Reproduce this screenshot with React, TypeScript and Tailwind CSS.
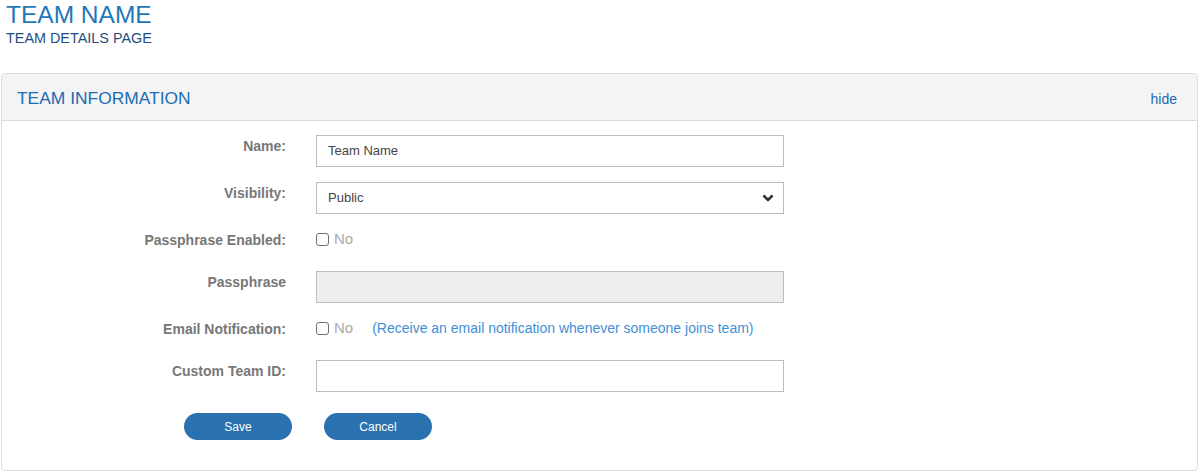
const font = { fontFamily: '"Liberation Sans", Arial, sans-serif' };

function Checkbox() {
  return (
    <span className="flex items-center">
      <span className="w-[13px] h-[13px] border border-[#6f6f6f] rounded-[3px] bg-white" />
      <span className="ml-[5px] text-[15px] leading-[20px] text-[#aaaaaa]">No</span>
    </span>
  );
}

function Row({
  label,
  children,
  kind = 'input',
}: {
  label: string;
  children: React.ReactNode;
  kind?: 'input' | 'check';
}) {
  return (
    <div className={`flex mb-[15px] ${kind === 'check' ? 'h-[27px]' : ''}`}>
      <div className="w-[284px] text-right font-bold text-[14px] leading-[20px] text-[#777] pt-[1px]">
        {label}
      </div>
      <div className="ml-[30px] flex">{children}</div>
    </div>
  );
}

export default function App() {
  return (
    <div className="w-[1200px] h-[472px] bg-white overflow-hidden" style={font}>
      <div className="pl-[6px] pt-[1px]">
        <h1 className="text-[24.5px] leading-[28px] text-[#1f78b8]">TEAM NAME</h1>
        <h2 className="text-[14.4px] leading-[18px] text-[#1d4e7f]">TEAM DETAILS PAGE</h2>
      </div>

      <div className="mt-[26px] ml-[1px] mr-[2px] border border-[#dcdcdc] rounded-[4px]">
        <div className="flex justify-between items-start bg-[#f4f4f4] border-b border-[#dcdcdc] rounded-t-[4px] pl-[15px] pr-[20px] pt-[14px] pb-[11px]">
          <span className="text-[17.4px] leading-[20px] text-[#1a6bb5]">TEAM INFORMATION</span>
          <span className="text-[14px] leading-[20px] text-[#1a6bb5] pt-[1px]">hide</span>
        </div>

        <div className="pt-[14px] pb-[30px]">
          <Row label="Name:">
            <div className="w-[468px] h-[32px] border border-[#bcbcbc] px-[11px] flex items-center text-[13px] text-[#444]">
              Team Name
            </div>
          </Row>
          <Row label="Visibility:">
            <div className="w-[468px] h-[32px] border border-[#bcbcbc] pl-[11px] pr-[9px] flex items-center justify-between text-[13px] text-[#444]">
              <span>Public</span>
              <svg width="12" height="8" viewBox="0 0 12 8">
                <path d="M1.5 1.5 L6 6 L10.5 1.5" fill="none" stroke="#333" strokeWidth="2.6" />
              </svg>
            </div>
          </Row>
          <Row label="Passphrase Enabled:" kind="check">
            <div className="h-[20px] flex items-center">
              <Checkbox />
            </div>
          </Row>
          <Row label="Passphrase">
            <div className="w-[468px] h-[32px] border border-[#bcbcbc] bg-[#eeeeee]" />
          </Row>
          <Row label="Email Notification:" kind="check">
            <div className="h-[20px] flex items-center">
              <Checkbox />
              <span className="ml-[19px] text-[14px] text-[#3f8fd6]">
                (Receive an email notification whenever someone joins team)
              </span>
            </div>
          </Row>
          <div className="flex mb-[21px]">
            <div className="w-[284px] text-right font-bold text-[14px] leading-[20px] text-[#777] pt-[1px]">
              Custom Team ID:
            </div>
            <div className="ml-[30px] w-[468px] h-[32px] border border-[#bcbcbc]" />
          </div>

          <div className="flex gap-[32px] pl-[182px]">
            <button className="w-[108px] h-[27px] rounded-full bg-[#2a71af] text-white text-[12px]">Save</button>
            <button className="w-[108px] h-[27px] rounded-full bg-[#2a71af] text-white text-[12px]">Cancel</button>
          </div>
        </div>
      </div>
    </div>
  );
}
